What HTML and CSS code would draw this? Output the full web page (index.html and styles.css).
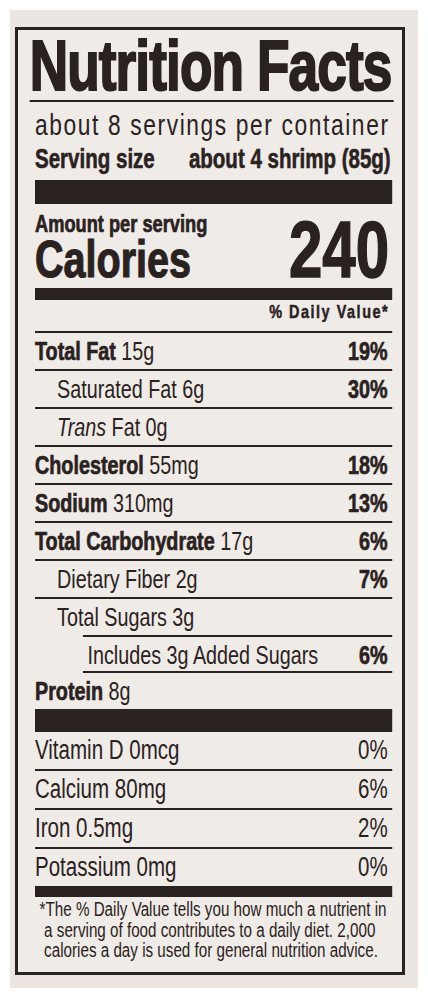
FILE: index.html
```html
<!DOCTYPE html>
<html lang="en">
<head>
  <meta charset="UTF-8">
  <meta name="viewport" content="width=device-width, initial-scale=1.0">
  <title>Nutrition Facts</title>
  <link rel="stylesheet" href="styles.css">
</head>
<body>
  <div class="photo">
    <div class="label">
      <!-- the whole panel is laid out wide, then squeezed to a condensed face -->
      <div class="content">
        <h1 class="title">Nutrition Facts</h1>
        <div class="servings">about 8 servings per container</div>
        <div class="serving-size">
          <span>Serving size</span>
          <span>about 4 shrimp (85g)</span>
        </div>

        <div class="bar bar-thick"></div>

        <div class="calories">
          <div>
            <div class="amount">Amount per serving</div>
            <div class="cal-label">Calories</div>
          </div>
          <div class="cal-num">240</div>
        </div>

        <div class="bar bar-mid"></div>

        <div class="dv-head">% Daily Value*</div>

        <div class="row"><span><b>Total Fat</b> 15g</span><b>19%</b></div>
        <div class="row indent"><span>Saturated Fat 6g</span><b>30%</b></div>
        <div class="row indent"><span><i>Trans</i> Fat 0g</span></div>
        <div class="row"><span><b>Cholesterol</b> 55mg</span><b>18%</b></div>
        <div class="row"><span><b>Sodium</b> 310mg</span><b>13%</b></div>
        <div class="row"><span><b>Total Carbohydrate</b> 17g</span><b>6%</b></div>
        <div class="row indent"><span>Dietary Fiber 2g</span><b>7%</b></div>
        <div class="row indent no-line"><span>Total Sugars 3g</span></div>
        <div class="row added"><span>Includes 3g Added Sugars</span><b>6%</b></div>
        <div class="row no-line"><span><b>Protein</b> 8g</span></div>

        <div class="bar bar-thick2"></div>

        <div class="row vit"><span>Vitamin D 0mcg</span><span>0%</span></div>
        <div class="row vit"><span>Calcium 80mg</span><span>6%</span></div>
        <div class="row vit"><span>Iron 0.5mg</span><span>2%</span></div>
        <div class="row vit no-line"><span>Potassium 0mg</span><span>0%</span></div>

        <div class="bar bar-mid2"></div>

        <p class="footnote">*The % Daily Value tells you how much a nutrient in<br>a serving of food contributes to a daily diet. 2,000<br>calories a day is used for general nutrition advice.</p>
      </div>
    </div>
  </div>
</body>
</html>
```

FILE: styles.css
```css
:root{
  --ink:#2a2220;
  --paper:#efebe7;
  --photo:#ebe6e1;
}
*{
  margin:0;
  padding:0;
  box-sizing:border-box;
}
body{
  background:#ffffff;
  font-family:"Liberation Sans",Arial,sans-serif;
  color:var(--ink);
}
.photo{
  margin:10px 10px 0 10px;
  width:408px;
  height:978px;
  background:var(--photo);
  padding:17px 0 0 5px;
}
.label{
  width:390px;
  height:948px;
  border:3px solid var(--ink);
  background:var(--paper);
  padding:0 0 0 17px;
}
.content{
  width:470px;
  transform:scaleX(0.76);
  transform-origin:0 0;
  white-space:nowrap;
}
b{
  font-weight:700;
  -webkit-text-stroke:0.7px var(--ink);
}
.title{
  font-size:70px;
  font-weight:700;
  line-height:68px;
  margin:2px -2px 0 -7px;
  letter-spacing:-1.2px;
  -webkit-text-stroke:2px var(--ink);
  border-bottom:2px solid var(--ink);
}
.servings{
  font-size:30px;
  line-height:30px;
  letter-spacing:2.1px;
  margin-top:8px;
}
.serving-size{
  display:flex;
  justify-content:space-between;
  font-size:27px;
  font-weight:700;
  line-height:32px;
  margin-top:3px;
  padding-right:2px;
  -webkit-text-stroke:0.6px var(--ink);
}
.bar{
  background:var(--ink);
}
.bar-thick{
  height:24px;
  margin-top:5px;
}
.calories{
  display:flex;
  justify-content:space-between;
  align-items:flex-end;
  font-weight:700;
  -webkit-text-stroke:0.7px var(--ink);
}
.amount{
  font-size:24px;
  line-height:24px;
  margin-top:8px;
}
.cal-label{
  font-size:52px;
  line-height:46px;
  -webkit-text-stroke:1.2px var(--ink);
}
.cal-num{
  font-size:79px;
  line-height:65px;
  padding-right:4px;
  -webkit-text-stroke:1.5px var(--ink);
}
.bar-mid{
  height:12px;
  margin-top:6px;
}
.dv-head{
  text-align:right;
  font-size:19px;
  font-weight:700;
  line-height:24px;
  letter-spacing:2px;
  padding:0 4px 7px 0;
  -webkit-text-stroke:0.5px var(--ink);
  border-bottom:2px solid var(--ink);
}
.row{
  display:flex;
  justify-content:space-between;
  font-size:26px;
  line-height:36px;
  height:38px;
  padding-right:6px;
  border-bottom:2px solid var(--ink);
}
.indent{
  padding-left:29px;
}
.added{
  margin-left:63px;
  padding-left:6px;
  border-top:2px solid var(--ink);
}
.no-line{
  border-bottom:none;
  height:36px;
}
.bar-thick2{
  height:23px;
}
.vit{
  font-size:27px;
  line-height:37px;
  height:39px;
}
.vit.no-line{
  height:37px;
}
.bar-mid2{
  height:11px;
}
.footnote{
  font-size:20px;
  line-height:20.5px;
  margin-top:2px;
  padding-left:12px;
  text-indent:-6px;
}
```
